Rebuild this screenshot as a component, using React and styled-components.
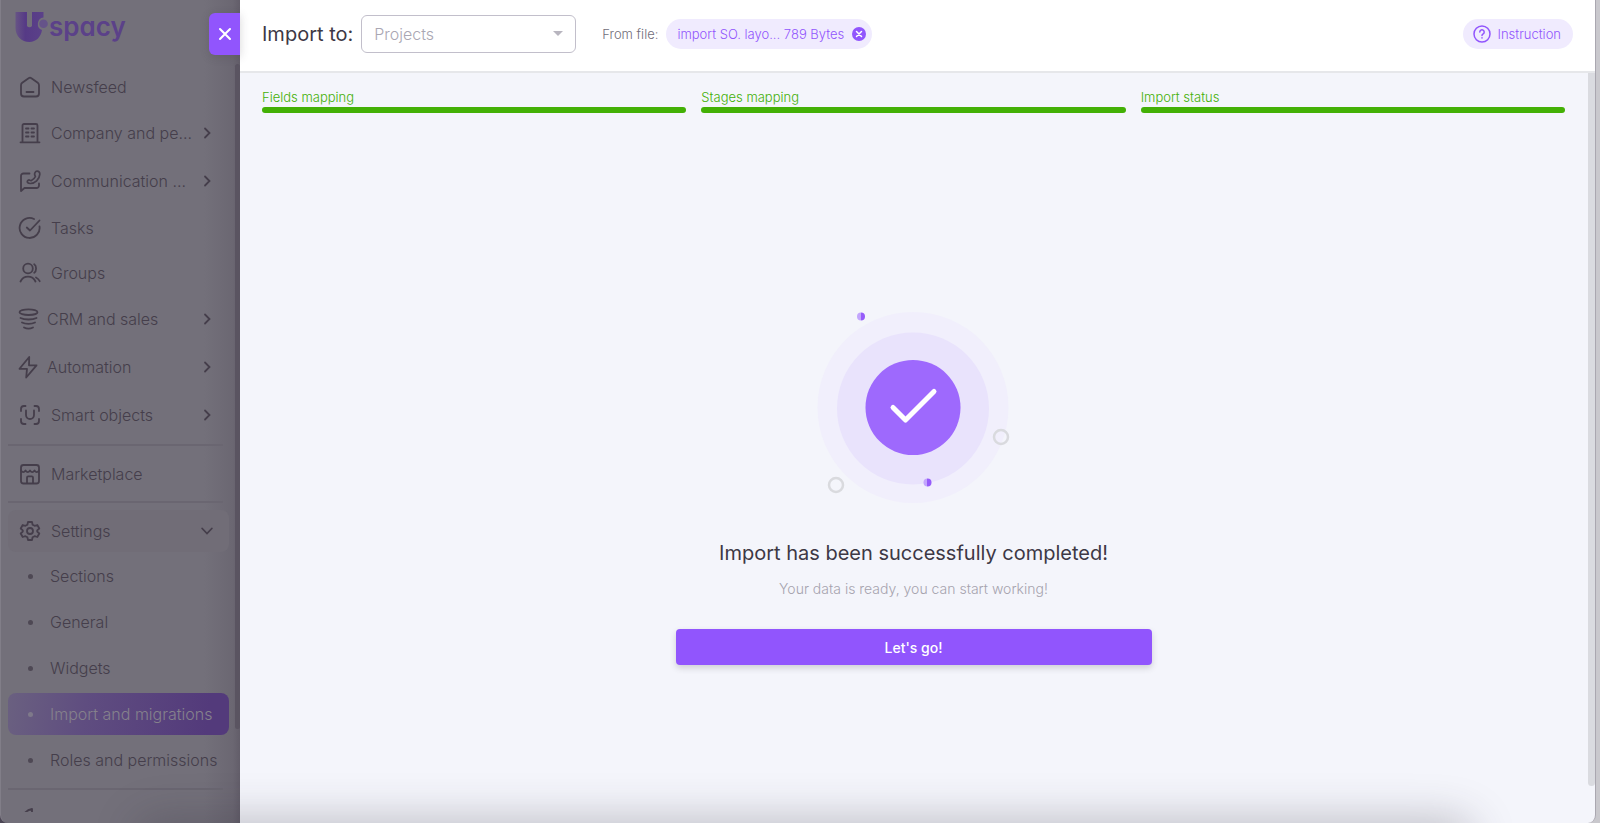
import React from "react";
import styled, { createGlobalStyle, css } from "styled-components";

const color = {
  dim: "#73707a",
  ink: "#453e4b",
  line: "#6a6671",
  violet: "#9155fd",
  violetSoft: "#f0ebfe",
  page: "#f4f5fb",
  green: "#43b005",
  heading: "#3d3845",
};

const GlobalStyle = createGlobalStyle`
  * { box-sizing: border-box; }
  body {
    margin: 0;
    background: #c9c8cd;
    font-family: Inter, "Liberation Sans", sans-serif;
    font-size: 16px;
    font-weight: 300;
    overflow: hidden;
  }
  button, select { font-family: inherit; font-weight: inherit; }
`;

const Shell = styled.div`
  position: relative;
  display: grid;
  grid-template-columns: 240px minmax(0, 1fr);
  height: 100vh;
  padding-right: 4px;
  overflow: hidden;
  background: linear-gradient(to right, #4b4654 50%, #c9c8cd 50%);
`;

/* ---------- sidebar ---------- */

const Sidebar = styled.aside`
  display: grid;
  grid-template-columns: minmax(0, 1fr) 5px;
  grid-template-rows: 64px minmax(0, 1fr);
  height: 100vh;
  overflow: hidden;
  padding-bottom: 11px;
  border-left: 1px solid #817e88;
  border-bottom-left-radius: 8px;
  background: linear-gradient(to right, ${color.dim} 85%, #6b6772 97%, #625d69);
`;

const Logo = styled.a`
  grid-column: 1 / -1;
  display: flex;
  align-items: flex-start;
  gap: 1px;
  padding: 11px 0 0 14px;
  color: #5b4189;
  text-decoration: none;
`;

const LogoWord = styled.span`
  font-size: 26px;
  line-height: 31px;
  font-weight: 600;
  font-feature-settings: "cv11";
`;

const Nav = styled.nav`
  overflow: hidden;
  padding: 0 6px 0 7px;
`;

const Rows = styled.ul`
  list-style: none;
  margin: 0;
  padding: 0;
`;

const Row = styled.li`
  display: flex;
  align-items: center;
  height: ${(p) => p.$h}px;
`;

const rowFace = css`
  display: flex;
  align-items: center;
  width: 100%;
  height: 42px;
  border: 0;
  border-radius: 8px;
  font-size: 16px;
  line-height: 24px;
  color: ${color.ink};
  background: transparent;
  text-align: left;
  text-decoration: none;
  white-space: nowrap;
`;

const NavLink = styled.a`
  ${rowFace}
  gap: 9px;
  padding: 0 16px 0 10px;
`;

const NavToggle = styled.button`
  ${rowFace}
  gap: ${(p) => (p.$tight ? 7 : 9)}px;
  padding: 0 16px 0 ${(p) => (p.$tight ? 8 : 10)}px;
  ${(p) => p.$open && `background: #716d77;`}
`;

const SubLink = styled.a`
  ${rowFace}
  gap: 17px;
  padding: 0 0 0 20px;
  ${(p) =>
    p.$active &&
    css`
      color: #85818c;
      background: linear-gradient(98deg, #6a6080, #5f4d80 35%, #533a7b 90%);
    `}
`;

const Bullet = styled.span`
  width: 5px;
  height: 5px;
  border-radius: 50%;
  background: currentColor;
  opacity: 0.8;
`;

const Label = styled.span`
  flex: 1;
`;

const Divider = styled.hr`
  height: 2px;
  margin: ${(p) => p.$top}px 6px ${(p) => p.$bottom}px 0;
  border: 0;
  background: ${color.line};
`;

const SideThumb = styled.div`
  height: 665px;
  border-radius: 3px;
  background: #5a5461;
`;

/* ---------- panel ---------- */

const Panel = styled.section`
  position: relative;
  display: flex;
  flex-direction: column;
  height: 100vh;
  min-width: 0;
  background: ${color.page};
  border-right: 1px solid #aaa7b0;
  border-bottom-right-radius: 8px;
`;

const CloseButton = styled.button`
  position: absolute;
  top: 13px;
  left: -31px;
  display: grid;
  place-items: center;
  width: 31px;
  height: 42px;
  padding: 0;
  border: 0;
  border-radius: 6px 0 0 6px;
  color: #fff;
  background: ${color.violet};
  box-shadow: 0 2px 10px rgba(58, 53, 65, 0.2);
`;

const Header = styled.header`
  display: flex;
  align-items: center;
  height: 73px;
  flex: none;
  padding: 0 22px 4px;
  background: #fff;
  border-bottom: 2px solid #e6e7ea;
`;

const ImportLabel = styled.label`
  font-size: 20px;
  line-height: 24px;
  font-weight: 400;
  color: ${color.heading};
`;

const SelectBox = styled.div`
  display: grid;
  align-items: center;
  width: 215px;
  margin: 0 26px 0 8px;
  color: #b8b5bf;

  > * { grid-area: 1 / 1; }
  > svg { justify-self: end; margin-right: 13px; pointer-events: none; }
`;

const Select = styled.select`
  appearance: none;
  width: 100%;
  height: 38px;
  padding: 0 36px 0 12px;
  border: 1px solid #c2bfcb;
  border-radius: 6px;
  background: #fff;
  color: #aaa7b3;
  font-size: 16px;
  opacity: 1;
`;

const Caption = styled.span`
  margin-right: 8px;
  font-size: 13px;
  line-height: 20px;
  color: #716d79;
`;

const pill = css`
  display: flex;
  align-items: center;
  height: 30px;
  border: 0;
  border-radius: 15px;
  font-size: 13px;
  line-height: 20px;
  color: ${color.violet};
  background: ${color.violetSoft};
`;

const FileChip = styled.div`
  ${pill}
  gap: 8px;
  padding: 0 6px 0 11px;
`;

const ClearButton = styled.button`
  display: flex;
  padding: 0;
  border: 0;
  background: none;
  color: inherit;
`;

const Instruction = styled.button`
  ${pill}
  gap: 6px;
  margin-left: auto;
  padding: 0 12px 0 10px;
`;

const Body = styled.div`
  display: grid;
  grid-template-columns: minmax(0, 1fr) 7px;
  flex: 1;
  min-height: 0;
`;

const Content = styled.main`
  display: flex;
  flex-direction: column;
  padding: 14px 23px 0 22px;
`;

const BodyThumb = styled.div`
  height: 95%;
  border-radius: 0 0 4px 4px;
  background: #dadbe0;
`;

const Steps = styled.ol`
  display: grid;
  grid-template-columns: repeat(3, minmax(0, 1fr));
  gap: 15px;
  margin: 0;
  padding: 0;
  list-style: none;
`;

const Step = styled.li`
  font-size: 13px;
  line-height: 20px;
  color: ${color.green};

  &::after {
    content: "";
    display: block;
    height: 6px;
    border-radius: 3px;
    background: ${color.green};
  }
`;

const Success = styled.div`
  display: flex;
  flex: 1;
  flex-direction: column;
  align-items: center;
  justify-content: center;
  padding-top: 36px;
`;

const Title = styled.h1`
  margin: 32px 0 12px;
  font-size: 20px;
  line-height: 28px;
  font-weight: 400;
  color: ${color.heading};
`;

const Subtitle = styled.p`
  margin: 0 0 30px;
  font-size: 14px;
  line-height: 20px;
  color: #a6a3ae;
`;

const PrimaryButton = styled.button`
  width: 476px;
  max-width: 100%;
  height: 36px;
  border: 0;
  border-radius: 4px;
  font-size: 14px;
  font-weight: 500;
  color: #fff;
  background: ${color.violet};
  box-shadow: 0 3px 6px rgba(58, 53, 65, 0.2);
`;

const BottomShade = styled.div`
  position: absolute;
  right: 140px;
  bottom: -30px;
  left: 150px;
  height: 20px;
  border-radius: 10px;
  box-shadow: 0 0 44px 14px rgba(50, 45, 60, 0.28);
  pointer-events: none;
`;

/* ---------- drawings ---------- */

const Glyph = ({ size = 24, width = 1.8, children }) => (
  <svg
    width={size}
    height={size}
    viewBox="0 0 24 24"
    fill="none"
    stroke="currentColor"
    strokeWidth={width}
    strokeLinecap="round"
    strokeLinejoin="round"
    aria-hidden="true"
  >
    {children}
  </svg>
);

const icons = {
  home: (
    <path d="M3 10.2a3 3 0 0 1 1.2-2.4l6.4-4.6a2.4 2.4 0 0 1 2.8 0l6.4 4.6A3 3 0 0 1 21 10.200V18.500a3 3 0 0 1-3 3H6a3 3 0 0 1-3-3zM8.500 17h7" />
  ),
  building: (
    <>
      <path d="M4.500 21V4.500a1.500 1.500 0 0 1 1.500-1.500h12a1.500 1.500 0 0 1 1.500 1.500V21M2.500 21.300h19" />
      <path d="M8 7.500h2.500M13.500 7.500H16M8 11.500h2.500M13.500 11.500H16M8 15.500h2.500M13.500 15.500H16" />
    </>
  ),
  talk: (
    <>
      <path d="M11.500 4.500H5.500a2.500 2.500 0 0 0-2.500 2.500V22l3.500-3H18.500a2.500 2.500 0 0 0 2.500-2.500V14.500" />
      <path d="M19 2.200c2 0 3 1.300 2.800 3.200C21.400 10.500 17 14.500 12.200 14.500c-1.800 0-2.900-.8-2.900-1.900 0-1.300 1.400-2 2.600-1.400l1.200.5c2-.9 3.500-2.300 4.300-4.200l-.6-1.300c-.7-1.700.5-4 2.200-4z" strokeWidth="1.700" />
    </>
  ),
  task: (
    <>
      <path d="M21.500 10.500A10 10 0 1 1 16 3" />
      <path d="m8.800 11.500 3.200 3L21.500 4.500" />
    </>
  ),
  people: (
    <>
      <circle cx="10" cy="7.500" r="4.800" />
      <path d="M2.500 20.500c1.500-3.200 4.300-4.800 7.500-4.800s6 1.600 7.500 4.800M16.200 3.200c2.500 1.500 2.500 7 0 8.600M18 16.500c1.700.8 2.800 2 3.700 3.700" />
    </>
  ),
  funnel: (
    <>
      <ellipse cx="12.500" cy="5.200" rx="9" ry="2.800" />
      <path d="M4.500 11c4 2 12 2 16 0M6 15.500c3.500 1.800 9.500 1.800 13 0M8 20.500c2.500 1.200 6.500 1.200 9 0" />
    </>
  ),
  bolt: <path d="M13.200 2 3.500 13.800H11L10.200 22.500 20.500 10.300H13z" />,
  scan: (
    <path d="M3 8V6a3 3 0 0 1 3-3h1.500M16.500 3H18a3 3 0 0 1 3 3v2M21 16v2a3 3 0 0 1-3 3h-1.500M7.500 21H6a3 3 0 0 1-3-3v-2M8 7.500v4.500a4 4 0 0 0 8 0V7.500" />
  ),
  shop: (
    <>
      <rect x="3" y="3" width="18" height="18.500" rx="2.500" />
      <path d="M3 8.500c1.500 2.200 3 2.200 4.500 0 1.500 2.200 3 2.200 4.500 0 1.500 2.200 3 2.200 4.500 0 1.500 2.200 3 2.200 4.500 0M9 21v-5.500a1.200 1.200 0 0 1 1.200-1.200h3.600a1.200 1.200 0 0 1 1.200 1.200V21" />
    </>
  ),
  gear: (
    <>
      <path d="M10 3h4l.6 2.700 2 1.100L19.300 6l2 3.500-2.100 1.900v1.200l2.100 1.900-2 3.500-2.700-.8-2 1.100L14 21h-4l-.6-2.700-2-1.100-2.700.8-2-3.500 2.100-1.900v-1.200L2.700 9.500l2-3.500 2.700.8 2-1.100z" />
      <circle cx="12" cy="12" r="3" />
    </>
  ),
  rocket: <path d="M5 9c3-4 6-5.500 9-6v6" />,
};

const ChevronRight = () => (
  <svg width="12" height="14" viewBox="0 0 12 14" fill="none" stroke="currentColor" strokeWidth="1.800" strokeLinecap="round" aria-hidden="true">
    <path d="M4 2.500l4.500 4.500L4 11.500" />
  </svg>
);

const ChevronDown = () => (
  <svg width="12" height="14" viewBox="0 0 12 14" fill="none" stroke="currentColor" strokeWidth="1.800" strokeLinecap="round" aria-hidden="true">
    <path d="M1.200 4.500l4.800 5 4.800-5" />
  </svg>
);

const LogoMark = () => (
  <svg width="33" height="33" viewBox="0 0 33 33" aria-hidden="true">
    <defs>
      <linearGradient id="mark" x1="0" x2="1">
        <stop offset="0" stopColor="#675485" />
        <stop offset="0.350" stopColor="#563a86" />
        <stop offset="1" stopColor="#5b4189" />
      </linearGradient>
    </defs>
    <path d="M0.500 1H12v14a3 3 0 0 0 5 0V1H28.500v5.500a6.500 6.500 0 0 0-1.500 12.500C26 26 21 31 14.500 31 6.500 31 .5 25 .5 17z" fill="url(#mark)" />
    <circle cx="28.500" cy="12.700" r="4.300" fill="#655389" />
  </svg>
);

const SuccessArt = () => (
  <svg width="200" height="200" viewBox="0 0 200 200" role="img" aria-label="Completed">
    <defs>
      <linearGradient id="bead">
        <stop offset="0.500" stopColor="#c3a6fd" />
        <stop offset="0.500" stopColor="#965cfa" />
      </linearGradient>
    </defs>
    <circle cx="99" cy="100.500" r="95.500" fill="#f1effc" />
    <circle cx="99" cy="101.500" r="76" fill="#e9e3fc" />
    <circle cx="99" cy="100.500" r="47.500" fill="#9e69fd" />
    <path d="M79 100.500 91.500 113 120 84.500" fill="none" stroke="#fff" strokeWidth="5" strokeLinecap="round" strokeLinejoin="round" />
    <circle cx="47" cy="9.500" r="4" fill="url(#bead)" />
    <circle cx="113.500" cy="175.500" r="4" fill="url(#bead)" />
    <circle cx="187" cy="130" r="7" fill="none" stroke="#d9dade" strokeWidth="2.500" />
    <circle cx="22" cy="178" r="7" fill="none" stroke="#d9dade" strokeWidth="2.500" />
  </svg>
);

/* ---------- content ---------- */

const mainItems = [
  { icon: "home", text: "Newsfeed" },
  { icon: "building", text: "Company and pe...", more: true },
  { icon: "talk", text: "Communication ...", more: true },
  { icon: "task", text: "Tasks" },
  { icon: "people", text: "Groups" },
  { icon: "funnel", text: "CRM and sales", more: true, tight: true },
  { icon: "bolt", text: "Automation", more: true, tight: true },
  { icon: "scan", text: "Smart objects", more: true },
];

const settingsItems = ["Sections", "General", "Widgets", "Import and migrations", "Roles and permissions"];

const NavItem = ({ item }) => (
  <Row $h={item.more ? 48 : 45}>
    {item.more ? (
      <NavToggle type="button" aria-expanded="false" $tight={item.tight}>
        <Glyph>{icons[item.icon]}</Glyph>
        <Label>{item.text}</Label>
        <ChevronRight />
      </NavToggle>
    ) : (
      <NavLink href="#">
        <Glyph>{icons[item.icon]}</Glyph>
        <Label>{item.text}</Label>
      </NavLink>
    )}
  </Row>
);

export default function App() {
  return (
    <>
      <GlobalStyle />
      <Shell>
        <Sidebar>
          <Logo href="#" aria-label="Uspacy">
            <LogoMark />
            <LogoWord>spacy</LogoWord>
          </Logo>
          <Nav>
            <Rows>
              {mainItems.map((item) => (
                <NavItem key={item.text} item={item} />
              ))}
            </Rows>
            <Divider $top={5} $bottom={5} />
            <Rows>
              <NavItem item={{ icon: "shop", text: "Marketplace" }} />
            </Rows>
            <Divider $top={5} $bottom={5} />
            <Rows>
              <Row $h={45}>
                <NavToggle type="button" aria-expanded="true" $open>
                  <Glyph>{icons.gear}</Glyph>
                  <Label>Settings</Label>
                  <ChevronDown />
                </NavToggle>
              </Row>
              {settingsItems.map((text) => (
                <Row key={text} $h={46}>
                  <SubLink href="#" $active={text === "Import and migrations"}>
                    <Bullet />
                    <span>{text}</span>
                  </SubLink>
                </Row>
              ))}
            </Rows>
            <Divider $top={5} $bottom={5} />
            <Rows>
              <Row $h={46}>
                <NavLink href="#" aria-label="Get started">
                  <Glyph>{icons.rocket}</Glyph>
                </NavLink>
              </Row>
            </Rows>
          </Nav>
          <SideThumb />
        </Sidebar>

        <Panel>
          <CloseButton type="button" aria-label="Close">
            <Glyph size={20} width={2.5}>
              <path d="M6 6l12 12M18 6 6 18" />
            </Glyph>
          </CloseButton>
          <Header>
            <ImportLabel htmlFor="target">Import to:</ImportLabel>
            <SelectBox>
              <Select id="target" disabled defaultValue="Projects">
                <option>Projects</option>
              </Select>
              <svg width="10" height="5" viewBox="0 0 10 5" aria-hidden="true">
                <path d="M0 0h10L5 5z" fill="currentColor" />
              </svg>
            </SelectBox>
            <Caption>From file:</Caption>
            <FileChip>
              <span>import SO. layo... 789 Bytes</span>
              <ClearButton type="button" aria-label="Remove file">
                <svg width="14" height="14" viewBox="0 0 14 14" aria-hidden="true">
                  <circle cx="7" cy="7" r="7" fill="currentColor" />
                  <path d="M4.500 4.500l5 5M9.500 4.500l-5 5" stroke="#fff" strokeWidth="1.500" strokeLinecap="round" />
                </svg>
              </ClearButton>
            </FileChip>
            <Instruction type="button">
              <svg width="18" height="18" viewBox="0 0 18 18" fill="none" stroke="currentColor" strokeWidth="1.500" strokeLinecap="round" aria-hidden="true">
                <circle cx="9" cy="9" r="8" />
                <path d="M6.800 7a2.200 2.200 0 1 1 3.400 1.900c-.8.500-1.200.9-1.200 1.600M9 12.800v.1" />
              </svg>
              Instruction
            </Instruction>
          </Header>
          <Body>
            <Content>
              <Steps>
                <Step>Fields mapping</Step>
                <Step>Stages mapping</Step>
                <Step>Import status</Step>
              </Steps>
              <Success>
                <SuccessArt />
                <Title>Import has been successfully completed!</Title>
                <Subtitle>Your data is ready, you can start working!</Subtitle>
                <PrimaryButton type="button">Let's go!</PrimaryButton>
              </Success>
            </Content>
            <BodyThumb />
          </Body>
        </Panel>
        <BottomShade />
      </Shell>
    </>
  );
}
